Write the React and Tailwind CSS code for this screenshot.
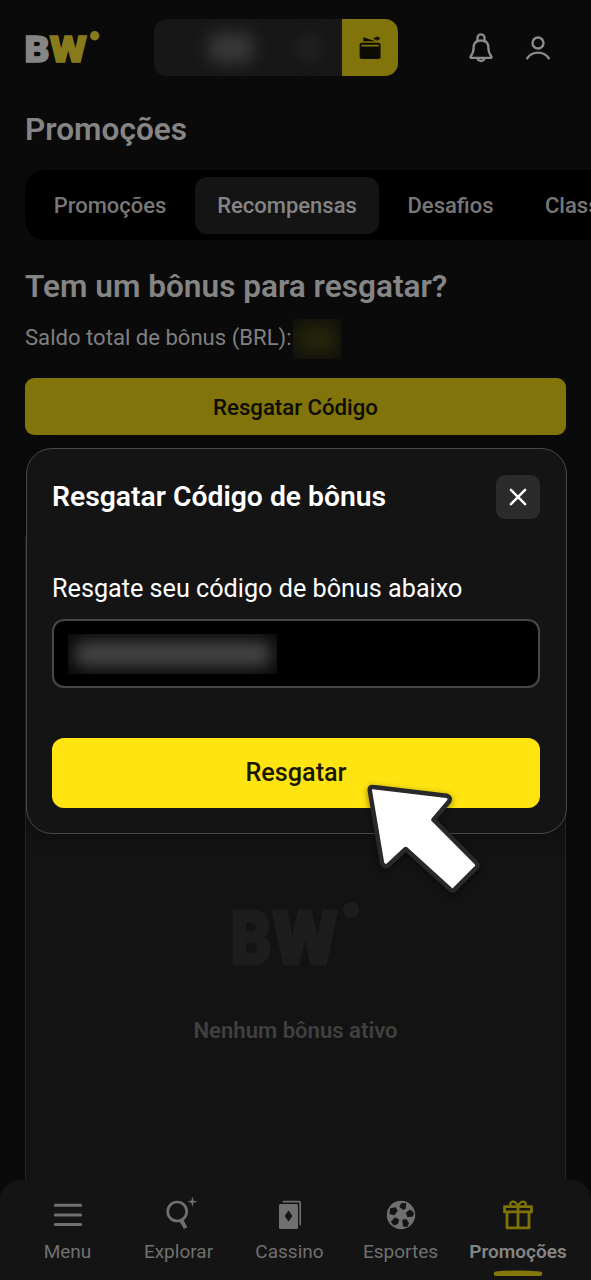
import React from 'react';

const Logo = ({ className, viewBox, b, w, dot, size, base, bFill, wFill }) => (
    <svg className={className} viewBox={viewBox} fontFamily="Roboto, sans-serif" fontWeight="900" fontSize={size} aria-label="BW">
        <text x={b.x} y={base} textLength={b.w} lengthAdjust="spacingAndGlyphs" fill={bFill} stroke={bFill} strokeWidth={b.s}>B</text>
        <text x={w.x} y={base} textLength={w.w} lengthAdjust="spacingAndGlyphs" fill={wFill} stroke={wFill} strokeWidth={w.s}>W</text>
        <circle cx={dot.x} cy={dot.y} r={dot.r} fill={wFill} />
    </svg>
);

const WalletIcon = () => (
    <svg className="w-[24px] h-[26px]" viewBox="0 0 24 26" fill="#0c0c02">
        <path d="M5.3 2.2v4h12.2L5.3 2.2Z" />
        <path d="M15.8 2.6h3V1l3.6 2.4-3.6 2.7V4.4h-3Z" />
        <path fillRule="evenodd" d="M3.6 7.8h17a2 2 0 0 1 2 2V22a2 2 0 0 1-2 2h-17a2 2 0 0 1-2-2V9.8a2 2 0 0 1 2-2ZM3.5 9.8v1.7h17.300V9.8Z" />
    </svg>
);

const BellIcon = () => (
    <svg className="w-[26px] h-[30px]" viewBox="0 0 26 30" fill="none" stroke="#8c8c8c" strokeWidth="2.3" strokeLinejoin="round" strokeLinecap="round">
        <path d="M10 8.200C9.300 7.200 9.300 5.900 9.500 4.900a3.500 3.500 0 0 1 7 0c.2 1 .2 2.300-.5 3.300" />
        <path d="M10 7.600h6c2.700 1.200 4.300 3.300 4.300 6.400 0 4.600.8 6.500 2.900 9.200.7 1 .5 1.600-.5 1.600H3.300c-1 0-1.200-.6-.5-1.600 2.100-2.700 2.900-4.600 2.900-9.200 0-3.100 1.600-5.200 4.300-6.400Z" />
        <path d="M9.500 25.500c.5 1.600 1.700 2.500 3.500 2.500s3-.9 3.500-2.500" />
    </svg>
);

const UserIcon = () => (
    <svg className="w-[26px] h-[24px]" viewBox="0 0 26 24" fill="none" stroke="#8c8c8c" strokeWidth="2.4" strokeLinecap="round">
        <circle cx="13" cy="7" r="5.500" />
        <path d="M2.200 22.200C4.800 18.600 8.600 16.600 13 16.600s8.200 2 10.800 5.600" />
    </svg>
);

const CloseIcon = () => (
    <svg className="w-[18px] h-[18px]" viewBox="0 0 18 18" stroke="#fff" strokeWidth="2.500" strokeLinecap="round">
        <path d="M1.900 1.900l14.200 14.200M16.100 1.900L1.900 16.100" />
    </svg>
);

const MenuIcon = () => (
    <svg className="w-8 h-8" viewBox="0 0 32 32" stroke="#707070" strokeWidth="3" strokeLinecap="round">
        <path d="M3.300 6.300h25.400M3.300 16h25.400M3.300 25.500h25.400" />
    </svg>
);

const ExploreIcon = () => (
    <svg className="w-8 h-8 overflow-visible" viewBox="0 0 32 32" fill="none" stroke="#707070">
        <circle cx="14.200" cy="12.500" r="9.500" strokeWidth="2.700" />
        <path d="M18.300 21.200l4.300 7.900" strokeWidth="4" />
        <path d="M29.400-2.400l1 4 4 1.100-4 1.100-1 4.100-1-4.100-4-1.100 4-1.100Z" fill="#707070" stroke="none" />
    </svg>
);

const CardsIcon = () => (
    <svg className="w-8 h-8" viewBox="0 0 32 32" fill="none">
        <path d="M9.500 2.700H25a1.200 1.200 0 0 1 1.200 1.200v21.500" stroke="#707070" strokeWidth="1.700" strokeLinecap="round" />
        <rect x="5" y="5" width="19" height="25" rx="1.500" fill="#707070" />
        <path d="M14.500 11.500l3.900 5.500-3.900 5.500-3.900-5.500Z" fill="#141414" />
    </svg>
);

const BallIcon = () => (
    <svg className="w-8 h-8" viewBox="0 0 32 32">
        <circle cx="16" cy="16" r="14.200" fill="#707070" />
        <g fill="#141414">
            <path d="M16.100 4.300l5-.3-.3 5.500-2.300 1.400-4.200-2.800Z" />
            <path d="M20.800 13.700l4.200-3.200 4 3.200-1 3.700-5.600.9Z" />
            <path d="M17.200 20.700l4.300-.8 2.500 4.500-1.800 3.600-4.200-.6Z" />
            <path d="M10 18.300l4.200 2.200-1.300 4.600-4.100 1.300-3-3.700Z" />
            <path d="M5.200 9.300l5.500-1.100 2 3.300-3.200 4.700-5.100-1.300Z" />
        </g>
    </svg>
);

const GiftIcon = () => (
    <svg className="w-8 h-8" viewBox="0 0 32 32" fill="none" stroke="#7e7208" strokeWidth="2.800" strokeLinejoin="round">
        <path d="M2.500 7.700h27v5.200h-27ZM5 13v15.900h22V13M16 7.700v21" />
        <path d="M16 7.500c-1-2.700-2.500-4.900-5-4.900-3 0-3.600 3.200-1.600 5M16 7.500c1-2.700 2.500-4.900 5-4.900 3 0 3.600 3.200 1.600 5" strokeWidth="2.300" />
    </svg>
);

const Pointer = () => (
    <svg className="absolute left-[355px] top-[770px] w-[140px] h-[140px] drop-shadow-[0_2px_3px_rgba(0,0,0,0.45)]" viewBox="355 770 140 140">
        <path
            d="M373 787L446.500 795.700Q451.500 797.500 449 801.500L433.500 819.700L476.500 863Q478.500 865.300 476.500 867.600L454.500 889.700Q452.500 891.300 450.500 889.700L405.700 849L388 865.500Q384 867.500 382 863L369.700 790Q369.700 786.500 373 787Z"
            fill="#fff" stroke="#292929" strokeWidth="4.500" strokeLinejoin="round"
        />
    </svg>
);

const TABS = [
    { label: 'Promoções', className: 'w-[170px] text-[#777777]' },
    { label: 'Recompensas', className: 'w-[184px] bg-[#141414] text-[#858585]' },
    { label: 'Desafios', className: 'w-[143px] text-[#777777]' },
    { label: 'Classificação', className: 'pl-[23px] text-[#777777]' },
];

const NAV = [
    { label: 'Menu', icon: <MenuIcon /> },
    { label: 'Explorar', icon: <ExploreIcon /> },
    { label: 'Cassino', icon: <CardsIcon /> },
    { label: 'Esportes', icon: <BallIcon /> },
    { label: 'Promoções', icon: <GiftIcon />, active: true },
];

const Header = () => (
    <header className="flex h-[95px] items-center pl-[20px]">
        <Logo
            className="w-[85px] h-[60px] shrink-0"
            viewBox="-5 -10 85 60" size="37" base="33.5" bFill="#858585" wFill="#887b1c"
            b={{ x: -0.5, w: 25, s: 1.5 }} w={{ x: 24.8, w: 37, s: 1.5 }} dot={{ x: 69.700, y: 7.700, r: 4.700 }}
        />
        <div className="ml-[49px] flex h-[57px] w-[244px] shrink-0 overflow-hidden rounded-[13px] bg-[#171717]">
            <div className="flex flex-1 items-center overflow-hidden pl-[54px]">
                <div className="h-[30px] w-[46px] rounded-xl bg-[#383838] blur-[8px]" />
                <div className="ml-[42px] h-[30px] w-[26px] rounded-xl bg-[#1f1f1f] blur-[6px]" />
            </div>
            <button className="flex w-[56px] items-center justify-center bg-[#80740a]"><WalletIcon /></button>
        </div>
        <div className="ml-[70px] flex items-center gap-[31px]">
            <BellIcon />
            <UserIcon />
        </div>
    </header>
);

const BottomNav = () => (
    <nav className="absolute inset-x-0 bottom-0 flex h-[100px] rounded-t-[20px] bg-[#141414] pl-[12px]">
        {NAV.map(({ label, icon, active }) => (
            <div key={label} className={`flex shrink-0 flex-col items-center pt-[19px] ${active ? 'w-[124px]' : 'w-[111px]'}`}>
                {icon}
                <span className={`mt-[8px] text-[19px] leading-[26px] whitespace-nowrap ${active ? 'font-semibold text-[#858585]' : 'text-[#707070]'}`}>{label}</span>
                {active && <svg className="mt-[4px] h-[8px] w-[50px]" viewBox="0 0 50 8"><path d="M3 2.5Q25 .3 47 2.5a2.300 2.300 0 0 1 0 4.600H3a2.300 2.300 0 0 1 0-4.600Z" fill="#85780a" /></svg>}
            </div>
        ))}
    </nav>
);

const RedeemModal = () => (
    <div className="absolute top-[448px] left-[26px] h-[386px] w-[541px] rounded-[26px] border border-[#484848] bg-[#141414] pr-[26px] pl-[25px] shadow-[0_4px_18px_rgba(0,0,0,0.25)]">
        <div className="flex items-center justify-between pt-[25px]">
            <h2 className="pt-px text-[28.3px] leading-[44px] font-semibold whitespace-nowrap text-white">Resgatar Código de bônus</h2>
            <button className="flex h-[44px] w-[44px] items-center justify-center rounded-[9px] bg-[#2b2b2b]"><CloseIcon /></button>
        </div>
        <p className="mt-[53px] text-[25.2px] leading-[34px] whitespace-nowrap text-white">Resgate seu código de bônus abaixo</p>
        <div className="mt-[13px] flex h-[69px] items-center rounded-[12px] border-[2.5px] border-[#484848] bg-black pl-[14px]">
            <div className="flex h-[40px] w-[209px] items-center justify-center overflow-hidden bg-[#0a0a0a]">
                <div className="h-[26px] w-[196px] rounded-lg bg-[#444444] blur-[8px]" />
            </div>
        </div>
        <button className="mt-[50px] flex h-[70px] w-full items-center justify-center rounded-[12px] bg-[#ffe411] text-[25.2px] font-medium text-[#1a1803]">Resgatar</button>
    </div>
);

export default function App() {
    return (
        <div className="relative flex h-[1280px] w-[591px] flex-col overflow-hidden bg-[#0a0a0a] font-['Roboto',sans-serif]">
            <Header />
            <h1 className="mt-[14px] ml-[25px] text-[31.6px] leading-[42px] font-semibold text-[#858585]">Promoções</h1>
            <div className="mt-[19px] ml-[25px] flex h-[70px] w-[680px] shrink-0 items-center rounded-[20px] bg-black">
                {TABS.map(({ label, className }) => (
                    <div key={label} className={`flex h-[57px] shrink-0 items-center justify-center rounded-[12px] pt-px text-[22px] font-medium ${className}`}>{label}</div>
                ))}
            </div>
            <h2 className="mt-[26px] ml-[25px] text-[31.6px] leading-[42px] font-semibold whitespace-nowrap text-[#858585]">Tem um bônus para resgatar?</h2>
            <div className="mt-[11px] ml-[25px] flex h-[40px] items-center text-[22.1px] text-[#808080]">
                <span className="w-[268px] pb-[2px] whitespace-nowrap">Saldo total de bônus (BRL):</span>
                <div className="flex h-[40px] w-[48px] items-center justify-center overflow-hidden bg-[#10100a]">
                    <div className="h-[28px] w-[40px] rounded-lg bg-[#26250c] blur-[8px]" />
                </div>
            </div>
            <button className="mx-[25px] mt-[19px] flex h-[57px] shrink-0 items-center justify-center rounded-[9px] bg-[#80740a] pt-[2px] text-[22.2px] font-medium text-[#0c0c02]">Resgatar Código</button>
            <section className="mx-[25px] mt-[102px] flex flex-1 flex-col items-center border-x border-[#242424] bg-[#131313] pt-[347px]">
                <Logo
                    className="w-[142px] h-[100px]"
                    viewBox="-6 -10 142 100" size="74" base="70" bFill="#1d1d1d" wFill="#1d1d1d"
                    b={{ x: -0.5, w: 41, s: 3 }} w={{ x: 41.5, w: 65, s: 3 }} dot={{ x: 120, y: 16, r: 8 }}
                />
                <p className="mt-[31px] text-[22.1px] leading-[30px] font-semibold text-[#404040]">Nenhum bônus ativo</p>
            </section>
            <BottomNav />
            <RedeemModal />
            <Pointer />
        </div>
    );
}
